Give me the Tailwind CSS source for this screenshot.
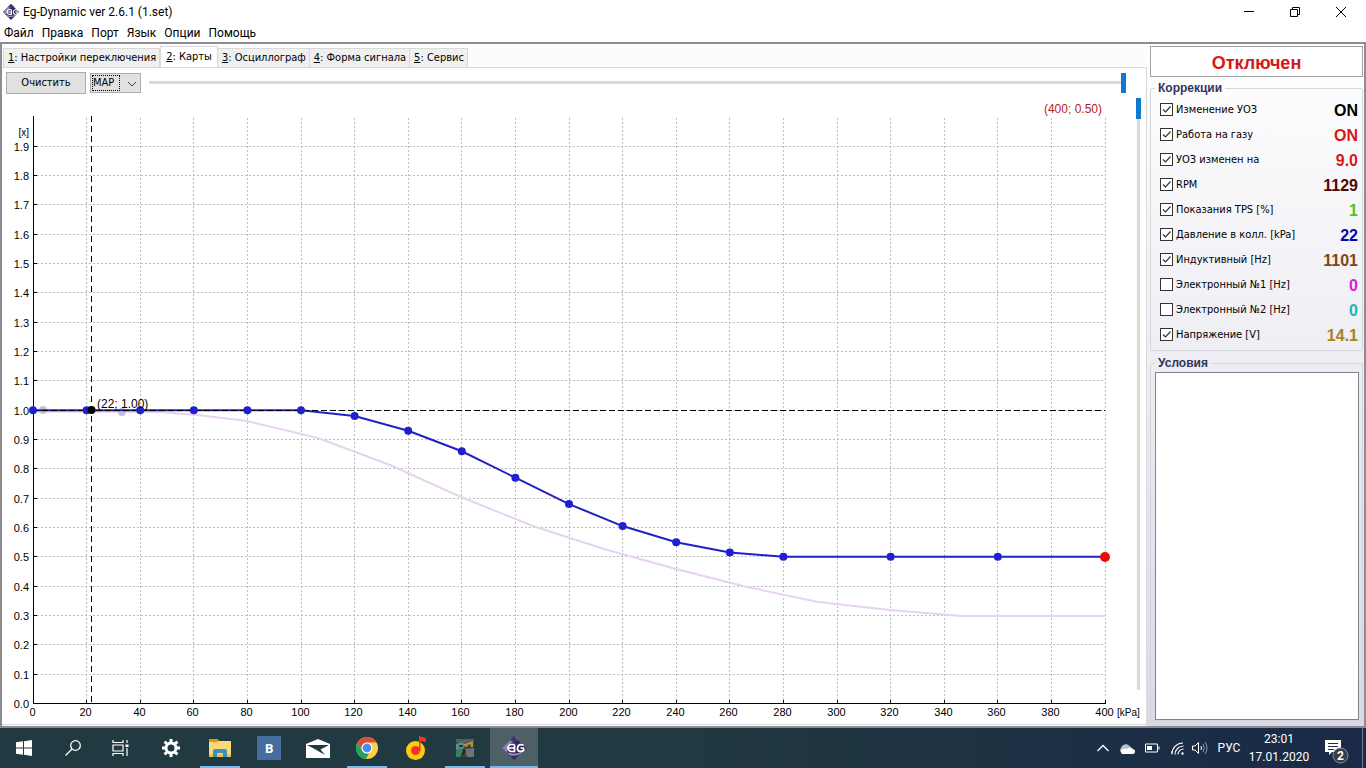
<!DOCTYPE html>
<html lang="ru">
<head>
<meta charset="utf-8">
<title>Eg-Dynamic ver 2.6.1 (1.set)</title>
<script src="https://cdn.jsdelivr.net/npm/@tailwindcss/browser@4"></script>
</head>
<body class="flex h-screen flex-col overflow-hidden bg-white font-['DejaVu_Sans_Condensed','Noto_Sans',sans-serif] text-[12px] leading-4 text-black">

<svg class="hidden" aria-hidden="true">
  <symbol id="logo" viewBox="0 0 24 24">
    <path d="M12 0 24 12 12 24 0 12Z" fill="#36295f"/>
    <path d="M10 2 15 1.500 16 4C10 5 6 9 5 17L0 12Z" fill="#8b7fb4"/>
    <path d="M12 0 16 4 11 6 8 4Z" fill="#43346f"/>
    <path d="M5 16C11 19 18 18 22 14L20 16.500C16 20 11 20 7.500 19Z" fill="#9f94c6"/>
    <path d="M12.500 8.500H9.500A3.500 3.500 0 0 0 9.500 15.500H12.500V8.500M7 12H12M21.500 9.500C20 8 16 8 15.500 12S19.500 16 21.500 14.500V12H18.500" fill="none" stroke="#fff" stroke-width="1.700"/>
  </symbol>
</svg>

<header>
  <div class="flex h-6 items-center pr-[2px]">
    <svg class="mx-[3px] size-4"><use href="#logo"/></svg>
    <h1 class="flex-1 pl-px font-['Roboto',sans-serif]">Eg-Dynamic ver 2.6.1 (1.set)</h1>
    <button aria-label="Свернуть" class="flex h-5 w-[46px] items-center justify-center"><svg class="size-3" viewBox="0 0 12 12"><path d="M1 5.500H11" stroke="#000" shape-rendering="crispEdges"/></svg></button>
    <button aria-label="Восстановить" class="flex h-5 w-[46px] items-center justify-center"><svg class="size-3" viewBox="0 0 12 12" fill="none" stroke="#000"><path d="M1.500 3.500H8.500V10.500H1.500ZM3.500 3.500V1.500H10.500V8.500H8.500"/></svg></button>
    <button aria-label="Закрыть" class="flex h-5 w-[46px] items-center justify-center"><svg class="size-3" viewBox="0 0 12 12"><path d="M1 1 11 11M11 1 1 11" stroke="#000"/></svg></button>
  </div>
  <nav class="flex h-[18px] items-center gap-2 px-1 font-['Roboto',sans-serif]">
    <button>Файл</button><button>Правка</button><button>Порт</button><button>Язык</button><button>Опции</button><button>Помощь</button>
  </nav>
</header>

<main class="flex min-h-0 flex-1 border-2 border-[#8c8c92] bg-[#fcfcfd]">
  <section class="flex min-w-0 flex-1 flex-col pt-[2px]">
    <div role="tablist" class="flex h-[21px] items-end pl-px text-[11px]">
      <button role="tab" class="h-[19px] border border-b-0 border-[#d9d9d9] bg-[#f0f0f0] pr-[3px] pl-1"><u>1</u>: Настройки переключения</button>
      <button role="tab" aria-selected="true" class="h-[21px] border border-b-0 border-[#d9d9d9] bg-white px-[5px]"><u>2</u>: Карты</button>
      <button role="tab" class="h-[19px] border border-b-0 border-l-0 border-[#d9d9d9] bg-[#f0f0f0] pr-[3px] pl-1"><u>3</u>: Осциллограф</button>
      <button role="tab" class="h-[19px] border border-b-0 border-l-0 border-[#d9d9d9] bg-[#f0f0f0] pr-[3px] pl-1"><u>4</u>: Форма сигнала</button>
      <button role="tab" class="h-[19px] border border-b-0 border-l-0 border-[#d9d9d9] bg-[#f0f0f0] pr-[3px] pl-1"><u>5</u>: Сервис</button>
    </div>
    <div class="mb-px flex min-h-0 flex-1 flex-col border border-l-0 border-[#d9d9d9] bg-white">
      <div class="flex h-[29px] items-center pr-5 pl-1">
        <button class="h-[22px] w-20 border border-[#adadad] bg-[#e1e1e1] text-[11px]">Очистить</button>
        <div class="relative ml-1 h-5 w-[51px]">
          <select aria-label="Карта" class="h-full w-full appearance-none border border-[#adadad] bg-[#e1e1e1] pl-[2px] text-[11px] leading-4"><option>MAP</option></select>
          <span class="pointer-events-none absolute top-[2px] left-[2px] h-4 w-7 border border-dotted border-black"></span>
          <svg class="pointer-events-none absolute top-2 right-1 h-[6px] w-[10px]" viewBox="0 0 10 6"><path d="M1 1 5 5 9 1" fill="none" stroke="#444"/></svg>
        </div>
        <input type="range" aria-label="Точка" min="0" max="100" value="100" class="ml-2 h-5 min-w-0 flex-1 appearance-none bg-linear-to-b from-[#dadada] to-[#dadada] bg-[length:100%_3px] bg-center bg-no-repeat [&::-webkit-slider-thumb]:h-5 [&::-webkit-slider-thumb]:w-[5px] [&::-webkit-slider-thumb]:appearance-none [&::-webkit-slider-thumb]:bg-[#0f78d0]">
      </div>
      <div class="flex min-h-0 flex-1">
        <svg id="chart" class="h-full min-w-0 flex-1 overflow-visible font-['Liberation_Sans',sans-serif]" viewBox="2 97 1132 627" font-size="11" role="img" aria-label="График коррекции">
          <g id="grid" stroke="#bdbdbd" stroke-dasharray="2 2" shape-rendering="crispEdges"></g>
          <polyline fill="none" stroke="#e7d3ee" stroke-width="2" points="33,411.500 160,412 197,415 247,421 318,438 390,465 461,497 533,526 604,549 676,569 747,587 818,602 890,610 961,616 1105,616"/>
          <g id="axis" stroke="#000" shape-rendering="crispEdges"></g>
          <g id="labels"></g>
          <g id="curve"></g>
        </svg>
        <div class="flex w-3 justify-start pt-px pb-[34px]">
          <input type="range" aria-label="Значение" min="0" max="100" value="100" class="h-full w-[9px] appearance-none bg-linear-to-b from-[#dadada] to-[#dadada] bg-[length:3px_100%] bg-center bg-no-repeat [writing-mode:vertical-lr] [direction:rtl] [&::-webkit-slider-thumb]:h-[21px] [&::-webkit-slider-thumb]:w-[5px] [&::-webkit-slider-thumb]:appearance-none [&::-webkit-slider-thumb]:bg-[#0f78d0]">
        </div>
      </div>
    </div>
  </section>

  <aside class="flex w-[217px] shrink-0 flex-col bg-linear-to-b from-white to-[#dad9e6] pr-px pb-[5px] pl-[3px] pt-[2px] font-['Liberation_Sans',sans-serif]">
    <div class="flex h-[31px] shrink-0 items-center justify-center border border-[#a0a0a0] bg-white pt-[3px] text-[18px] font-bold text-[#d41717]">Отключен</div>
    <fieldset class="mt-[3px] h-[271px] shrink-0 rounded-xs border border-[#d5d5df] pr-1 pl-[9px]">
      <legend class="-ml-[5px] px-[3px] text-[12px] font-bold leading-4 text-[#34345e]">Коррекции</legend>
      <div id="rows" class="flex flex-col pt-px font-['DejaVu_Sans_Condensed','Noto_Sans',sans-serif] text-[11px]"></div>
    </fieldset>
    <fieldset class="mt-1 flex min-h-0 flex-1 flex-col rounded-xs border border-[#d5d5df] pr-[3px] pl-1">
      <legend class="px-[3px] text-[12px] font-bold leading-4 text-[#34345e]">Условия</legend>
      <textarea aria-label="Условия" class="mt-px block w-full flex-1 resize-none border border-[#82828a] bg-white"></textarea>
    </fieldset>
  </aside>
</main>

<footer class="flex h-10 shrink-0 bg-linear-to-r from-[#213940] via-[#213940] via-50% to-[#192947] text-white">
  <div class="flex gap-px">
    <button aria-label="Пуск" class="flex h-10 w-12 items-center justify-center"><svg class="size-4" viewBox="0 0 16 16" fill="#fff"><path d="M0 2.300 7 1.300V7.500H0ZM8 1.200 16 0V7.500H8ZM0 8.500H7V14.700L0 13.700ZM8 8.500H16V16L8 14.800Z"/></svg></button>
    <button aria-label="Поиск" class="flex h-10 w-12 items-center justify-center"><svg class="size-4" viewBox="0 0 16 16" fill="none" stroke="#fff" stroke-width="1.300"><circle cx="10.500" cy="5.500" r="4.800"/><path d="M7 9 .5 15.500"/></svg></button>
    <button aria-label="Представление задач" class="flex h-10 w-12 items-center justify-center"><svg class="mr-1 h-4 w-[17px]" viewBox="0 0 17 16" fill="none" stroke="#fff" stroke-width="1.200"><path d="M1 0V2.500H11V0M1 5H11V11H1ZM1 16V13.500H11V16M15 0V3M15 8V16"/><path d="M13.500 4.500H16.500V7H13.500Z" fill="#fff" stroke="none"/></svg></button>
    <button aria-label="Параметры" class="flex h-10 w-12 items-center justify-center"><svg class="size-[18px]" viewBox="0 0 18 18" fill="none" stroke="#fff"><circle cx="9" cy="9" r="5" stroke-width="3"/><path d="M9 0V3M9 15V18M0 9H3M15 9H18M2.600 2.600 4.800 4.800M13.200 13.200 15.400 15.400M2.600 15.400 4.800 13.200M13.200 4.800 15.400 2.600" stroke-width="3"/></svg></button>
    <button aria-label="Проводник" class="relative flex h-10 w-12 items-center justify-center"><svg class="h-[18px] w-[22px]" viewBox="0 0 22 18"><path d="M0 0H8L10 2H22V18H0Z" fill="#f8d878"/><path d="M1 0H8L10 2 8 3H0V0Z" fill="#d99b18"/><path d="M0 15H22V18H0Z" fill="#eec15b"/><path d="M4 18V12Q4 10 6 10H16Q18 10 18 12V18H14V15Q14 14 13 14H9Q8 14 8 15V18Z" fill="#3e91bd"/></svg><span class="absolute inset-x-1 bottom-0 h-[2px] bg-[#76b9ed]"></span></button>
    <button aria-label="ВКонтакте" class="flex h-10 w-12 items-center justify-center"><span class="flex size-6 items-center justify-center bg-[#456d9f] font-['Open_Sans',sans-serif] text-[13px] font-bold">B</span></button>
    <button aria-label="Почта" class="flex h-10 w-12 items-center justify-center"><svg class="h-[19px] w-6" viewBox="0 0 24 19"><path d="M0 5 12 0 24 5V19H0Z" fill="#fff"/><path d="M1 6H23L14.500 10.500 19 16 9.500 10.500Z" fill="#213940"/></svg></button>
    <button aria-label="Chrome" class="relative flex h-10 w-12 items-center justify-center"><svg class="size-[22px]" viewBox="0 0 22 22"><circle cx="11" cy="11" r="11" fill="#ffce45"/><path d="M1.500 5.500A11 11 0 0 1 20.500 5.500H11A5.500 5.500 0 0 0 6.200 13.800Z" fill="#dc4b3e"/><path d="M1.500 5.500 6.200 13.800A5.500 5.500 0 0 0 13 16L10 22A11 11 0 0 1 1.500 5.500Z" fill="#1da462"/><circle cx="11" cy="11" r="5.500" fill="#fff"/><circle cx="11" cy="11" r="4.400" fill="#4c8bf5"/></svg><span class="absolute inset-x-1 bottom-0 h-[2px] bg-[#76b9ed]"></span></button>
    <button aria-label="Музыка" class="flex h-10 w-12 items-center justify-center"><svg class="h-6 w-5" viewBox="0 0 20 24"><circle cx="9.500" cy="14.500" r="9.500" fill="#ffcc0d"/><circle cx="9.500" cy="14.500" r="4.500" fill="#f0352d"/><path d="M13 0 20 2V6L14.500 5V15H13Z" fill="#f0352d"/></svg></button>
    <button aria-label="Программа" class="relative flex h-10 w-12 items-center justify-center"><svg class="size-[18px]" viewBox="0 0 18 18"><path d="M0 0H18V18H0Z" fill="#39423f"/><path d="M0 0H18V2L8 4 0 3Z" fill="#55635f"/><path d="M0 5 6 3 9 6 7 10 0 11Z" fill="#5d8f8c"/><path d="M8 5 17 2V8H15L14 5 12 6 11 8 8 7Z" fill="#b5943c"/><path d="M0 12 5 9 7 13 4 18H0Z" fill="#3c7f5c"/><path d="M9 10 18 9V18H11Z" fill="#6b7674"/><path d="M3 7H7M6 16 9 11" stroke="#151e1d" stroke-width="1.500"/></svg><span class="absolute inset-x-1 bottom-0 h-[2px] bg-[#76b9ed]"></span></button>
    <button aria-label="Eg-Dynamic" class="relative flex h-10 w-12 items-center justify-center bg-[#4d5f67]"><svg class="size-6"><use href="#logo"/></svg><span class="absolute inset-x-0 bottom-0 h-[2px] bg-[#76b9ed]"></span></button>
  </div>
  <div class="ml-auto flex items-center font-['Roboto',sans-serif] text-[12px]">
    <button aria-label="Скрытые значки" class="flex w-6 justify-center"><svg class="h-2 w-3" viewBox="0 0 12 8"><path d="M.5 7 6 1.500 11.500 7" fill="none" stroke="#fff" stroke-width="1.300"/></svg></button>
    <button aria-label="OneDrive" class="flex w-6 justify-center"><svg class="h-[11px] w-4" viewBox="0 0 16 11"><path d="M2 5A5 5 0 0 1 10 2.500L14 6 3 10A3 3 0 0 1 2 5Z" fill="#b9c0ca"/><path d="M3 11A3 3 0 0 1 3.500 6Q6 5 8 6A4 4 0 0 1 13.500 6 2.500 2.500 0 0 1 13.500 11Z" fill="#fff"/></svg></button>
    <button aria-label="Батарея" class="flex w-[26px] justify-center"><svg class="h-[10px] w-[15px]" viewBox="0 0 15 10"><path d="M.5 1H12.500V9H.5ZM14 3.500V6.500" fill="none" stroke="#fff"/><path d="M2 3H7V7H2Z" fill="#fff"/></svg></button>
    <button aria-label="Сеть" class="flex w-6 justify-center"><svg class="size-[13px]" viewBox="0 0 13 13" fill="none" stroke="#fff" stroke-width="1.100"><path d="M1 12A11 11 0 0 1 12 1M4 12.500A8.500 8.500 0 0 1 12.500 4M7 12.500A5.500 5.500 0 0 1 12.500 7"/><circle cx="11.500" cy="11.500" r="1.200" fill="#fff" stroke="none"/><path d="M.5 9V12.500" opacity=".5"/></svg></button>
    <button aria-label="Громкость" class="flex w-[22px] justify-center"><svg class="h-[14px] w-4" viewBox="0 0 16 14" fill="none" stroke="#fff"><path d="M.5 5H3L6.500 1.500V12.500L3 9H.5Z"/><path d="M9 5Q10 7 9 9"/><path d="M11 3Q13.500 7 11 11M13 1Q17 7 13 13" opacity=".5"/></svg></button>
    <button class="w-9">РУС</button>
    <button class="w-16 text-center font-['Liberation_Sans_Narrow','Roboto',sans-serif] leading-[18px]"><span class="font-['Roboto',sans-serif] text-[12px]">23:01<br>17.01.2020</span></button>
    <button aria-label="Уведомления" class="flex w-[51px] justify-center pt-2 pl-[2px]"><svg class="h-6 w-[25px]" viewBox="0 0 25 24"><path d="M0 0H16V12H7L4 15V12H0Z" fill="#fff"/><path d="M3 3.500H13M3 6.500H13M3 9.500H9" stroke="#1b2b46"/><circle cx="15.500" cy="15.500" r="7.500" fill="#353e4b" stroke="#89919c"/><text x="15.500" y="19.500" text-anchor="middle" font-size="12" font-weight="bold" fill="#fff">2</text></svg></button>
    <span class="h-10 w-1 border-l border-[#6e7a8c]"></span>
  </div>
</footer>

<script>
const X = v => 33 + v * 2.68, Y = v => 703.5 - v * 293.3;
const line = (x1, y1, x2, y2, extra = '') => `<line x1="${x1}" y1="${y1}" x2="${x2}" y2="${y2}" ${extra}/>`;
const px = n => Math.floor(n) + 0.5;
let grid = '', axis = '', labels = '', curve = '';
for (let v = 0; v <= 400; v += 20) {
  const x = px(X(v));
  if (v) grid += line(x, 118, x, 703);
  axis += line(x, 700, x, 704);
  labels += `<text x="${x - 1}" y="716" text-anchor="middle">${v}</text>`;
}
for (let i = 0; i < 20; i++) {
  const y = px(Y(i / 10));
  if (i) grid += line(33, y, 1105, y);
  axis += line(33, y, 37, y);
  labels += `<text x="29" y="${y + 4}" text-anchor="end">${(i / 10).toFixed(1)}</text>`;
}
axis += line(33.5, 116, 33.5, 704) + line(33, 703.5, 1106, 703.5) + line(91.5, 116, 91.5, 704, 'stroke-dasharray="6 4"');
labels += '<text x="29" y="136" text-anchor="end" font-size="10">[x]</text><text x="1117" y="716" font-size="10">[kPa]</text>';
const data = [[0,1],[20,1],[40,1],[60,1],[80,1],[100,1],[120,.98],[140,.93],[160,.86],[180,.77],[200,.68],[220,.605],[240,.55],[260,.515],[280,.5],[320,.5],[360,.5],[400,.5]];
curve += '<circle cx="43" cy="410" r="4" fill="#c5bfdf"/><circle cx="122" cy="412" r="4" fill="#c5bfdf"/>';
curve += `<polyline fill="none" stroke="#2020c4" stroke-width="2" points="${data.map(([a, b]) => X(a) + ',' + Y(b)).join(' ')}"/>`;
curve += line(33, 410.5, 1105, 410.5, 'stroke="#000" stroke-dasharray="6 3" shape-rendering="crispEdges"');
data.slice(0, -1).forEach(([a, b]) => curve += `<circle cx="${X(a)}" cy="${Y(b)}" r="4" fill="#2020d0"/>`);
curve += '<circle cx="91.500" cy="410" r="4" fill="#000"/><circle cx="1105" cy="557" r="5" fill="#ee0808"/>';
curve += '<text x="97" y="408" font-size="12">(22; 1.00)</text><text x="1102" y="113" text-anchor="end" font-size="12" fill="#b81c1c">(400; 0.50)</text>';
for (const [id, html] of Object.entries({ grid, axis, labels, curve })) document.getElementById(id).innerHTML = html;

const rows = [
  ['Изменение УОЗ', 'ON', '#000000', 1], ['Работа на газу', 'ON', '#d81818', 1], ['УОЗ изменен на', '9.0', '#d81818', 1],
  ['RPM', '1129', '#500808', 1], ['Показания TPS [%]', '1', '#4cc41c', 1], ['Давление в колл. [kPa]', '22', '#0808a8', 1],
  ['Индуктивный [Hz]', '1101', '#804810', 1], ['Электронный №1 [Hz]', '0', '#d820d8', 0], ['Электронный №2 [Hz]', '0', '#20b4b4', 0],
  ['Напряжение [V]', '14.1', '#a88418', 1]];
document.getElementById('rows').innerHTML = rows.map(([name, value, color, on], i) => `
  <div class="flex h-[25px] items-center justify-between">
    <label for="c${i}" class="flex items-center gap-[3px] whitespace-nowrap"><span class="relative flex size-[13px]"><input id="c${i}" type="checkbox" ${on ? 'checked' : ''} class="peer size-[13px] appearance-none border border-[#333] bg-white"><svg class="pointer-events-none absolute inset-0 hidden size-[13px] peer-checked:block" viewBox="0 0 13 13"><path d="M3 6.500 5.500 9 10.500 3.500" fill="none" stroke="#333" stroke-width="1.200"/></svg></span>${name}</label>
    <output for="c${i}" class="pt-[2px] font-['Liberation_Sans',sans-serif] text-[16px] font-bold" style="color:${color}">${value}</output>
  </div>`).join('');
</script>
</body>
</html>
